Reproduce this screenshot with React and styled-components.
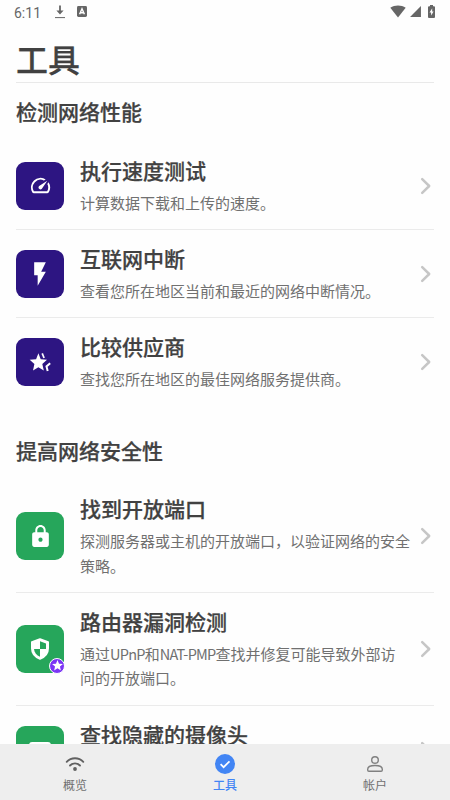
import React from "react";
import styled, { createGlobalStyle } from "styled-components";
import {
  MdSpeed,
  MdFlashOn,
  MdLock,
  MdSignalCellular4Bar,
  MdStar,
} from "react-icons/md";

const GlobalStyle = createGlobalStyle`
  * {
    box-sizing: border-box;
  }

  body {
    margin: 0;
    overflow: hidden;
    background: #fefefe;
    font-family: "Noto Sans CJK SC", sans-serif;
    color: #414141;
  }

  h1, h2, h3, p {
    margin: 0;
  }

  h1, h2, h3 {
    -webkit-text-stroke: 0.25px currentColor;
  }

  svg {
    display: block;
  }
`;

const Screen = styled.div`
  width: 450px;
  height: 800px;
  display: flex;
  flex-direction: column;
  overflow: hidden;
`;

const StatusBar = styled.div`
  height: 25px;
  flex: none;
  display: flex;
  align-items: center;
  padding: 0 15px 2px 14px;
  color: #666;
`;

const Clock = styled.span`
  width: 41px;
  padding-top: 2px;
  font-family: Roboto, sans-serif;
  font-size: 14px;
  line-height: 24px;
`;

const StatusIcons = styled.div`
  display: flex;
  align-items: center;
  gap: ${(props) => props.$gap}px;
  margin-left: ${(props) => (props.$end ? "auto" : 0)};
`;

const Content = styled.main`
  flex: 1;
  min-height: 0;
  overflow: hidden;
  padding: 0 16px;
`;

const PageTitle = styled.h1`
  height: 58px;
  border-bottom: 1px solid #e9e9e9;
  font-size: 32px;
  font-weight: 500;
  line-height: 67px;
`;

const SectionTitle = styled.h2`
  height: ${(props) => props.$height}px;
  padding-top: ${(props) => props.$top}px;
  font-size: 21px;
  font-weight: 500;
  line-height: 32px;
`;

const Row = styled.div`
  height: ${(props) => (props.$tall ? 112.5 : 88)}px;
  display: flex;
  align-items: center;
  border-bottom: ${(props) => (props.$last ? 0 : 1)}px solid #ebebeb;
`;

const Tile = styled.div`
  position: relative;
  flex: none;
  width: 48px;
  height: 48px;
  border-radius: 9px;
  display: flex;
  align-items: center;
  justify-content: center;
  background: ${(props) => props.$color};
  color: #fff;
`;

const Badge = styled.div`
  position: absolute;
  right: -1px;
  bottom: -1px;
  width: 16px;
  height: 16px;
  border: 1px solid #fff;
  border-radius: 50%;
  display: flex;
  align-items: center;
  justify-content: center;
  background: #7b35f5;
`;

const Texts = styled.div`
  width: 332px;
  margin-left: 16px;
  padding-bottom: 1px;
  flex: none;
`;

const RowTitle = styled.h3`
  font-size: 21px;
  font-weight: 500;
  line-height: 31.5px;
  margin-bottom: 4.5px;
`;

const Description = styled.p`
  min-height: 24.5px;
  font-size: 15px;
  line-height: 24.5px;
  color: #707070;
`;

const Latin = styled.span`
  font-size: 14.5px;
  letter-spacing: -0.75px;
`;

const Arrow = styled.div`
  margin-left: auto;
  color: #c6c6c6;
`;

const TabBar = styled.nav`
  height: 56px;
  flex: none;
  display: grid;
  grid-template-columns: repeat(3, 1fr);
  background: #eee;
`;

const Tab = styled.div`
  display: flex;
  flex-direction: column;
  align-items: center;
  padding-top: 8px;
  font-size: 12px;
  font-weight: ${(props) => (props.$active ? 500 : 400)};
  line-height: 18px;
  color: ${(props) => (props.$active ? "#4285f4" : "#707070")};
`;

const TabIcon = styled.div`
  height: 24px;
  display: flex;
  align-items: center;
`;

const DownloadIcon = () => (
  <svg width="10" height="14" viewBox="0 0 10 14" fill="none">
    <path d="M4.100 0.500h1.800v5h2.700L5 9.600 1.400 5.500h2.700z" fill="currentColor" />
    <path d="M0 12.600h10" stroke="currentColor" strokeWidth="1" />
  </svg>
);

const AppBadgeIcon = () => (
  <svg width="10" height="11" viewBox="0 0 10 11">
    <rect width="10" height="11" rx="1.4" fill="currentColor" />
    <path d="M2.6 8.3L5 2.8l2.4 5.5M3.3 6.7h3.4" fill="none" stroke="#fff" strokeWidth="1.4" />
  </svg>
);

const WifiFullIcon = () => (
  <svg width="16" height="13" viewBox="0 0 16 13">
    <path d="M0.3 2.8C4.8-0.4 11.2-0.4 15.7 2.8L8 12.6z" fill="currentColor" />
  </svg>
);

const BatteryIcon = () => (
  <svg width="7" height="13" viewBox="0 0 7 13">
    <path d="M2 0h3v1.2h1q1 0 1 1V12q0 1-1 1H1q-1 0-1-1V2.200q0-1 1-1h1z" fill="currentColor" />
    <path d="M4.200 3.200L1.500 7.600h1.600v3L5.600 6.400H4.200z" fill="#fff" />
  </svg>
);

const StarsIcon = () => (
  <svg width="24" height="24" viewBox="0 0 24 24" fill="none">
    <path
      d="M10.400 3.200l2.300 6.100 6.300 0.500-4.700 4.300 1.500 6.400-5.400-3.300-5.400 3.300 1.400-6.400L1.700 9.800l6.400-0.500z"
      fill="#fff"
    />
    <path d="M14.200 3.400l1.900 4.600" stroke="#fff" strokeWidth="1.700" />
    <path d="M22.200 13.300l-3.700 3.100 1.200 4.500" stroke="#fff" strokeWidth="2" />
  </svg>
);

const ShieldIcon = () => (
  <svg width="24" height="24" viewBox="0 0 24 24">
    <path
      d="M12 2.100L20.100 5.100v6.200c0 4.700-3.100 8.700-8.100 10.500-5-1.800-8.100-5.800-8.100-10.500V5.100z"
      fill="#fff"
      stroke="#fff"
      strokeWidth="1.800"
      strokeLinejoin="round"
    />
    <path d="M12 4.300l6 2.200v5.500h-6z" fill="#26a65b" />
    <path d="M12 12v7.800c-3.400-1.400-5.700-4.200-6-7.800z" fill="#26a65b" />
  </svg>
);

const CameraIcon = () => (
  <svg width="24" height="24" viewBox="0 0 24 24">
    <rect x="1" y="4" width="22" height="17" rx="3" fill="#fff" />
    <circle cx="12" cy="12.500" r="5" fill="#26a65b" />
  </svg>
);

const ChevronIcon = () => (
  <svg width="16" height="18" viewBox="0 0 16 18" fill="none">
    <path
      d="M4.200 2.200L11.200 9l-7 6.800"
      stroke="currentColor"
      strokeWidth="2.500"
      strokeLinecap="round"
      strokeLinejoin="round"
    />
  </svg>
);

const WifiIcon = () => (
  <svg width="20" height="16" viewBox="0 0 20 16" fill="none" stroke="#616161" strokeLinecap="round">
    <path d="M1.700 5.800C6.300 1 13.700 1 18.300 5.800" strokeWidth="1.900" />
    <path d="M5 9.500c2.900-2.800 7.100-2.800 10 0" strokeWidth="1.900" />
    <circle cx="10" cy="13" r="1.900" fill="#616161" stroke="none" />
  </svg>
);

const CheckIcon = () => (
  <svg width="20" height="20" viewBox="0 0 20 20" fill="none">
    <circle cx="10" cy="10" r="10" fill="#4285f4" />
    <path d="M5.600 10.200l3 3 5.900-5.900" stroke="#fff" strokeWidth="1.700" />
  </svg>
);

const PersonIcon = () => (
  <svg width="18" height="18" viewBox="0 0 18 18" fill="none" stroke="#808080" strokeWidth="1.400">
    <circle cx="9" cy="5" r="3.300" />
    <path d="M1.700 14.300c0-5 14.600-5 14.600 0v0.700q0 1.200-1.200 1.200H2.900q-1.200 0-1.200-1.200z" />
  </svg>
);

const performanceTools = [
  {
    title: "执行速度测试",
    text: "计算数据下载和上传的速度。",
    icon: <MdSpeed size={23} />,
  },
  {
    title: "互联网中断",
    text: "查看您所在地区当前和最近的网络中断情况。",
    icon: <MdFlashOn size={28} />,
  },
  {
    title: "比较供应商",
    text: "查找您所在地区的最佳网络服务提供商。",
    icon: <StarsIcon />,
  },
];

const securityTools = [
  {
    title: "找到开放端口",
    text: "探测服务器或主机的开放端口，以验证网络的安全策略。",
    icon: <MdLock size={25} />,
    tall: true,
  },
  {
    title: "路由器漏洞检测",
    text: (
      <>
        通过<Latin>UPnP</Latin>和<Latin>NAT-PMP</Latin>查找并修复可能导致外部访
        <br />
        问的开放端口。
      </>
    ),
    icon: <ShieldIcon />,
    tall: true,
    badge: true,
  },
  {
    title: "查找隐藏的摄像头",
    icon: <CameraIcon />,
  },
];

const ToolList = ({ tools, color }) => (
  <>
    {tools.map((tool, index) => (
      <Row key={tool.title} $tall={tool.tall} $last={index === tools.length - 1}>
        <Tile $color={color}>
          {tool.icon}
          {tool.badge && (
            <Badge>
              <MdStar size={13} />
            </Badge>
          )}
        </Tile>
        <Texts>
          <RowTitle>{tool.title}</RowTitle>
          <Description>{tool.text}</Description>
        </Texts>
        <Arrow>
          <ChevronIcon />
        </Arrow>
      </Row>
    ))}
  </>
);

const App = () => {
  return (
    <>
      <GlobalStyle />
      <Screen>
        <StatusBar>
          <Clock>6:11</Clock>
          <StatusIcons $gap={12}>
            <DownloadIcon />
            <AppBadgeIcon />
          </StatusIcons>
          <StatusIcons $end $gap={3}>
            <WifiFullIcon />
            <MdSignalCellular4Bar size={13} />
            <span />
            <BatteryIcon />
          </StatusIcons>
        </StatusBar>
        <Content>
          <PageTitle>工具</PageTitle>
          <SectionTitle $height={59} $top={12}>
            检测网络性能
          </SectionTitle>
          <ToolList tools={performanceTools} color="#2d1582" />
          <SectionTitle $height={74.5} $top={28}>
            提高网络安全性
          </SectionTitle>
          <ToolList tools={securityTools} color="#26a65b" />
        </Content>
        <TabBar>
          <Tab>
            <TabIcon>
              <WifiIcon />
            </TabIcon>
            概览
          </Tab>
          <Tab $active>
            <TabIcon>
              <CheckIcon />
            </TabIcon>
            工具
          </Tab>
          <Tab>
            <TabIcon>
              <PersonIcon />
            </TabIcon>
            帐户
          </Tab>
        </TabBar>
      </Screen>
    </>
  );
};

export default App;
